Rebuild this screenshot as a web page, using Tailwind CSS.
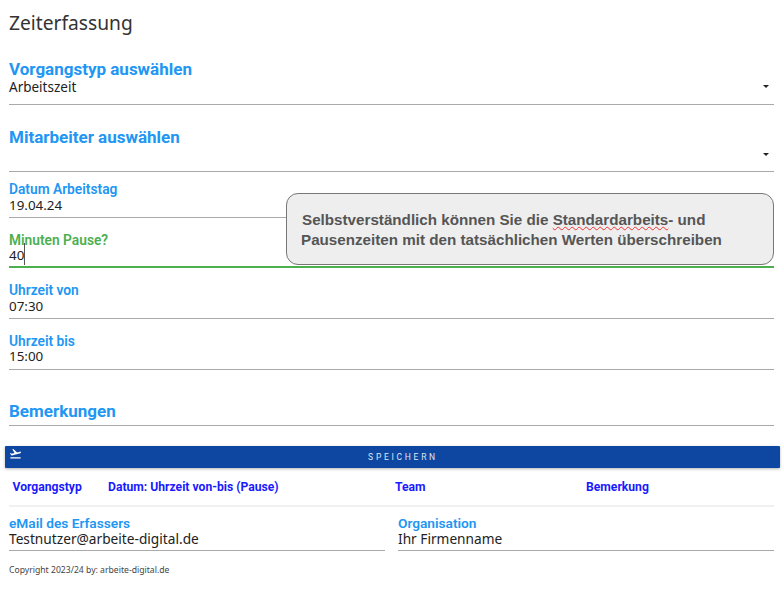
<!DOCTYPE html>
<html lang="de">
<head>
<meta charset="utf-8">
<script src="https://cdn.jsdelivr.net/npm/@tailwindcss/browser@4"></script>
<title>Zeiterfassung</title>
</head>
<body class="bg-white font-['Noto_Sans',sans-serif] text-[#222]">
<div class="relative w-[782px] h-[597px] overflow-hidden">
  <div class="pl-[9px] pr-[8px] pt-[10px]">
    <h1 class="h-[50px] text-[19.2px] leading-[26px] font-normal text-[#333]">Zeiterfassung</h1>

    <div class="h-[45px] border-b border-[#aaa] relative">
      <div class="font-['Roboto',sans-serif] font-bold text-[17px] leading-[19px] text-[#2196f3]">Vorgangstyp auswählen</div>
      <div class="text-[13.5px] leading-[16px]">Arbeitszeit</div>
      <span class="absolute right-[5px] top-[25px] w-0 h-0 border-x-[3px] border-x-transparent border-t-[3px] border-t-[#222]"></span>
    </div>

    <div class="h-[67px] border-b border-[#aaa] relative pt-[22px]">
      <div class="font-['Roboto',sans-serif] font-bold text-[17px] leading-[20px] text-[#2196f3]">Mitarbeiter auswählen</div>
      <span class="absolute right-[5px] top-[48px] w-0 h-0 border-x-[3px] border-x-transparent border-t-[3px] border-t-[#222]"></span>
    </div>

    <div class="h-[46px] border-b border-[#aaa] pt-[9px]">
      <div class="font-['Roboto',sans-serif] font-semibold text-[13.75px] leading-[16px] text-[#2196f3]">Datum Arbeitstag</div>
      <div class="text-[13.4px] leading-[16px]">19.04.24</div>
    </div>

    <div class="h-[50px] border-b-2 border-[#4caf50] pt-[14px]">
      <div class="font-['Roboto',sans-serif] font-semibold text-[13.75px] leading-[16px] text-[#4caf50]">Minuten Pause?</div>
      <div class="text-[13.4px] leading-[15px] relative">40<span class="absolute left-[15px] -top-[5px] w-px h-[22px] bg-[#555]"></span></div>
    </div>

    <div class="h-[51px] border-b border-[#aaa] pt-[14px]">
      <div class="font-['Roboto',sans-serif] font-semibold text-[13.75px] leading-[16px] text-[#2196f3]">Uhrzeit von</div>
      <div class="text-[13.4px] leading-[16px]">07:30</div>
    </div>

    <div class="h-[51px] border-b border-[#aaa] pt-[14px]">
      <div class="font-['Roboto',sans-serif] font-semibold text-[13.75px] leading-[16px] text-[#2196f3]">Uhrzeit bis</div>
      <div class="text-[13.4px] leading-[15px]">15:00</div>
    </div>

    <div class="h-[56px] border-b border-[#aaa] pt-[31px]">
      <div class="font-['Roboto',sans-serif] font-bold text-[17px] leading-[20px] text-[#2196f3]">Bemerkungen</div>
    </div>
  </div>

  <button class="relative block ml-[5px] mt-[20px] w-[775px] h-[22px] rounded-[1px] bg-[#0d47a1] shadow-[0_1px_3px_rgba(0,0,0,0.3)] text-center pl-[21px] font-['Roboto',sans-serif] text-[8.5px] leading-[22px] tracking-[0.32em] text-[#dfe7f3]">
    <svg class="absolute left-[4px] top-[1px] w-[13px] h-[13px]" viewBox="0 0 24 24" fill="#fff"><path d="M2.5 19h19v2h-19v-2zm19.57-9.36c-.21-.8-1.04-1.28-1.84-1.06L14.92 10l-6.9-6.43-1.93.51 4.14 7.17-4.97 1.33-1.97-1.54-1.45.39 2.59 4.49s7.12-1.9 16.57-4.43c.81-.23 1.28-1.05 1.07-1.85z"/></svg>
    SPEICHERN
  </button>

  <div class="ml-[9px] mr-[8px] h-[39px] border-b-2 border-[#f0f0f0] pt-[2px] font-['Roboto',sans-serif] font-bold text-[12.15px] text-[#1a1aff] flex items-center">
    <span class="w-[99px] pl-[3.5px]">Vorgangstyp</span>
    <span class="w-[287px]">Datum: Uhrzeit von-bis (Pause)</span>
    <span class="w-[191px]">Team</span>
    <span>Bemerkung</span>
  </div>

  <div class="pl-[9px] pr-[8px] flex pt-[8px]">
    <div class="w-[376px] h-[36px] border-b border-[#aaa]">
      <div class="font-['Roboto',sans-serif] font-semibold text-[13.7px] leading-[16px] text-[#2196f3]">eMail des Erfassers</div>
      <div class="text-[13.7px] leading-[16px]">Testnutzer@arbeite-digital.de</div>
    </div>
    <div class="w-[376px] ml-[13px] h-[36px] border-b border-[#aaa]">
      <div class="font-['Roboto',sans-serif] font-semibold text-[13.7px] leading-[16px] text-[#2196f3]">Organisation</div>
      <div class="text-[13.7px] leading-[16px]">Ihr Firmenname</div>
    </div>
  </div>

  <div class="pl-[9px] pt-[13px] text-[8.65px] leading-[12px] text-[#444]">Copyright 2023/24 by: arbeite-digital.de</div>

  <div class="absolute left-[286px] top-[193px] w-[488px] h-[72px] rounded-[12px] border border-[#777] bg-[#eeeeee] font-['Liberation_Sans',sans-serif] font-bold text-[15.2px] leading-[20px] text-[#555] pt-[16px]">
    <div class="pl-[15px]">Selbstverständlich können Sie die <span class="underline decoration-wavy decoration-[#e33] decoration-1">Standardarbeits</span>- und</div>
    <div class="pl-[14px]">Pausenzeiten mit den tatsächlichen Werten überschreiben</div>
  </div>
</div>
</body>
</html>
